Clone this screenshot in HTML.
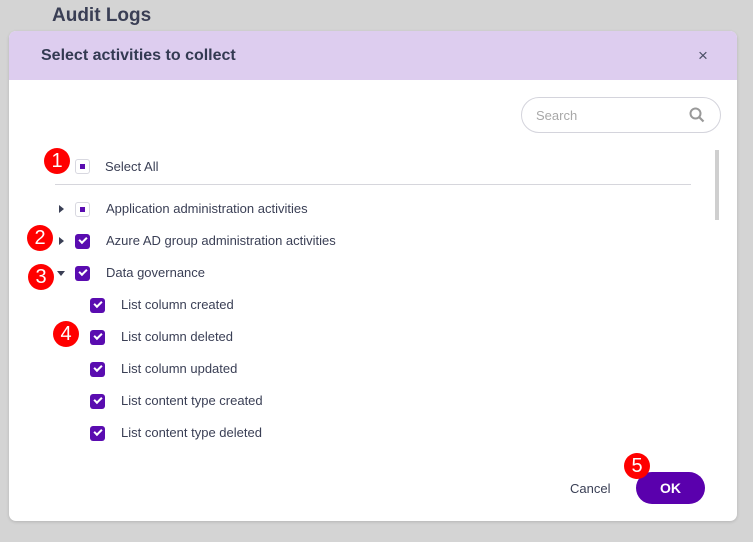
<!DOCTYPE html>
<html><head><meta charset="utf-8"><style>
*{margin:0;padding:0;box-sizing:border-box}
body{width:753px;height:542px;background:#d4d4d4;position:relative;overflow:hidden;font-family:"Liberation Sans",sans-serif;}
.title{position:absolute;left:52px;top:5px;font-size:19px;font-weight:bold;color:#3a3f55;}
.dlg{position:absolute;left:9px;top:31px;width:728px;height:490px;background:#fff;border-radius:7px;overflow:hidden;box-shadow:0 1px 3px rgba(0,0,0,.15)}
.hdr{height:49px;background:#ddcdef;}
.hdr span{position:absolute;left:32px;top:16px;font-size:16px;font-weight:bold;color:#333a52}
.x{position:absolute;left:689px;top:15px;font-size:17px;color:#4a4f65}
.search{position:absolute;left:512px;top:66px;width:200px;height:36px;border:1px solid #d4d4dc;border-radius:18px;}
.search span{position:absolute;left:14px;top:10px;font-size:13px;color:#a8a8a8}
.scroll{position:absolute;left:706px;top:119px;width:4px;height:70px;background:#cfcfcf}
.div{position:absolute;left:46px;top:153px;width:636px;height:1px;background:#d6d6dc}
.row{position:absolute;font-size:13px;color:#3a3f55;}
.cb{position:absolute;width:15px;height:15px;border-radius:3px;}
.cb.on{background:#5a0cb0}
.cb.on::after{content:"";position:absolute;left:4px;top:3px;width:6px;height:3px;border-left:2px solid #fff;border-bottom:2px solid #fff;transform:rotate(-45deg)}
.cb.part{border:1px solid #d8d8e0;background:#fff}
.cb.part::after{content:"";position:absolute;left:4px;top:4px;width:5px;height:5px;background:#5a0cb0}
.arr{position:absolute;width:0;height:0}
.arr.r{border-top:4px solid transparent;border-bottom:4px solid transparent;border-left:5px solid #3a3f55}
.arr.d{border-left:4px solid transparent;border-right:4px solid transparent;border-top:5px solid #3a3f55}
.b{position:absolute;width:26px;height:26px;border-radius:50%;background:#f00;color:#fff;font-size:20px;text-align:center;line-height:26px;}
.cancel{position:absolute;left:561px;top:450px;font-size:13px;color:#3a3f55}
.ok{position:absolute;left:627px;top:441px;width:69px;height:32px;border-radius:16px;background:#5a00ad;color:#fff;font-weight:bold;font-size:14px;text-align:center;line-height:32px}
</style></head><body>
<div class="title">Audit Logs</div>
<div class="dlg">
<div class="hdr"><span>Select activities to collect</span><div class="x">×</div></div>
<div class="search"><span>Search</span>
<svg style="position:absolute;left:167px;top:9px" width="16" height="16" viewBox="0 0 16 16"><circle cx="6.5" cy="6.5" r="5" fill="none" stroke="#999" stroke-width="2"/><path d="M10 10l4.5 4.5" stroke="#999" stroke-width="2.2"/></svg></div>
<div class="scroll"></div>
<div class="div"></div>
<div class="cb part" style="left:66px;top:128px"></div><div class="row" style="left:96px;top:128px">Select All</div>
<div class="arr r" style="left:50px;top:174px"></div><div class="cb part" style="left:66px;top:171px"></div><div class="row" style="left:97px;top:170px">Application administration activities</div>
<div class="arr r" style="left:50px;top:206px"></div><div class="cb on" style="left:66px;top:203px"></div><div class="row" style="left:97px;top:202px">Azure AD group administration activities</div>
<div class="arr d" style="left:48px;top:240px"></div><div class="cb on" style="left:66px;top:235px"></div><div class="row" style="left:97px;top:234px">Data governance</div>
<div class="cb on" style="left:81px;top:267px"></div><div class="row" style="left:112px;top:266px">List column created</div>
<div class="cb on" style="left:81px;top:299px"></div><div class="row" style="left:112px;top:298px">List column deleted</div>
<div class="cb on" style="left:81px;top:331px"></div><div class="row" style="left:112px;top:330px">List column updated</div>
<div class="cb on" style="left:81px;top:363px"></div><div class="row" style="left:112px;top:362px">List content type created</div>
<div class="cb on" style="left:81px;top:395px"></div><div class="row" style="left:112px;top:394px">List content type deleted</div>
<div class="cancel">Cancel</div>
<div class="ok">OK</div>
</div>
<div class="b" style="left:44px;top:148px">1</div>
<div class="b" style="left:27px;top:225px">2</div>
<div class="b" style="left:28px;top:264px">3</div>
<div class="b" style="left:53px;top:321px">4</div>
<div class="b" style="left:624px;top:453px">5</div>
</body></html>
